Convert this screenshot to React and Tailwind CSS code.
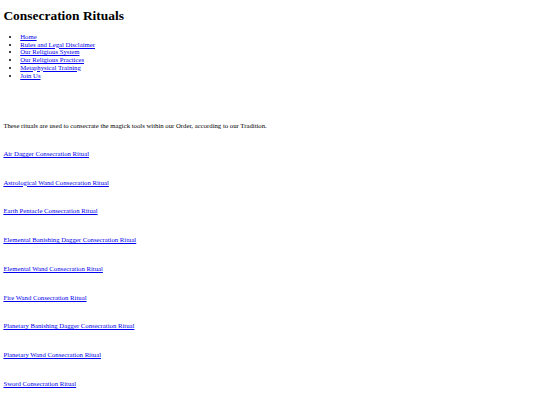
const navLinks = [
  "Home",
  "Rules and Legal Disclaimer",
  "Our Religious System",
  "Our Religious Practices",
  "Metaphysical Training",
  "Join Us",
];

const rituals = [
  "Air Dagger Consecration Ritual",
  "Astrological Wand Consecration Ritual",
  "Earth Pentacle Consecration Ritual",
  "Elemental Banishing Dagger Consecration Ritual",
  "Elemental Wand Consecration Ritual",
  "Fire Wand Consecration Ritual",
  "Planetary Banishing Dagger Consecration Ritual",
  "Planetary Wand Consecration Ritual",
  "Sword Consecration Ritual",
];

export default function App() {
  return (
    <div className="min-h-screen bg-white px-[3.4px] pb-[12px] text-black font-['Liberation_Serif',serif] text-[6.72px] leading-[1.15]">
      <div className="h-[8px]" />
      <h1 className="text-[13.44px] font-bold leading-[1.15]">Consecration Rituals</h1>

      <ul className="mt-[9.5px] list-disc pl-[16.8px]">
        {navLinks.map((label) => (
          <li key={label}>
            <a href="#" className="text-[#0000ee] underline">
              {label}
            </a>
          </li>
        ))}
      </ul>

      <p className="mt-[42.5px]">
        These rituals are used to consecrate the magick tools within our Order, according to our Tradition.
      </p>

      <div className="mt-[20.5px] flex flex-col gap-[21px]">
        {rituals.map((name) => (
          <p key={name}>
            <a href="#" className="text-[#0000ee] underline">
              {name}
            </a>
          </p>
        ))}
      </div>
    </div>
  );
}
